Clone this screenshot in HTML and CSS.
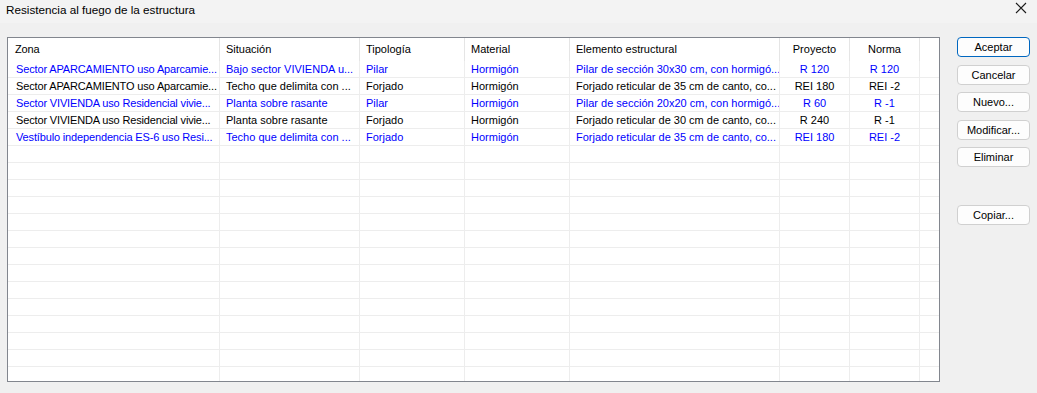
FILE: index.html
```html
<!DOCTYPE html>
<html lang="es">
<head>
    <meta charset="UTF-8">
    <meta name="viewport" content="width=device-width, initial-scale=1.0">
    <title>Resistencia al fuego de la estructura</title>
    <link rel="stylesheet" href="styles.css">
</head>
<body>
    <div class="titlebar">
        <span class="title">Resistencia al fuego de la estructura</span>
        <span class="close">
            <svg width="12" height="12" viewBox="0 0 12 12">
                <path d="M1 1 L11 11 M11 1 L1 11" stroke="#1a1a1a" stroke-width="1.1" fill="none"/>
            </svg>
        </span>
    </div>

    <div class="dialog">
        <div class="list">
            <div class="row head">
                <div class="cell first">Zona</div>
                <div class="cell">Situación</div>
                <div class="cell">Tipología</div>
                <div class="cell">Material</div>
                <div class="cell">Elemento estructural</div>
                <div class="cell center">Proyecto</div>
                <div class="cell center">Norma</div>
                <div class="cell last"></div>
            </div>

            <div class="row blue">
                <div class="cell first">Sector APARCAMIENTO uso Aparcamie...</div>
                <div class="cell">Bajo sector VIVIENDA u...</div>
                <div class="cell">Pilar</div>
                <div class="cell">Hormigón</div>
                <div class="cell">Pilar de sección 30x30 cm, con hormigó...</div>
                <div class="cell center">R 120</div>
                <div class="cell center">R 120</div>
                <div class="cell last"></div>
            </div>
            <div class="row">
                <div class="cell first">Sector APARCAMIENTO uso Aparcamie...</div>
                <div class="cell">Techo que delimita con ...</div>
                <div class="cell">Forjado</div>
                <div class="cell">Hormigón</div>
                <div class="cell">Forjado reticular de 35 cm de canto, co...</div>
                <div class="cell center">REI 180</div>
                <div class="cell center">REI -2</div>
                <div class="cell last"></div>
            </div>
            <div class="row blue">
                <div class="cell first">Sector VIVIENDA uso Residencial vivie...</div>
                <div class="cell">Planta sobre rasante</div>
                <div class="cell">Pilar</div>
                <div class="cell">Hormigón</div>
                <div class="cell">Pilar de sección 20x20 cm, con hormigó...</div>
                <div class="cell center">R 60</div>
                <div class="cell center">R -1</div>
                <div class="cell last"></div>
            </div>
            <div class="row">
                <div class="cell first">Sector VIVIENDA uso Residencial vivie...</div>
                <div class="cell">Planta sobre rasante</div>
                <div class="cell">Forjado</div>
                <div class="cell">Hormigón</div>
                <div class="cell">Forjado reticular de 30 cm de canto, co...</div>
                <div class="cell center">R 240</div>
                <div class="cell center">R -1</div>
                <div class="cell last"></div>
            </div>
            <div class="row blue">
                <div class="cell first">Vestíbulo independencia ES-6 uso Resi...</div>
                <div class="cell">Techo que delimita con ...</div>
                <div class="cell">Forjado</div>
                <div class="cell">Hormigón</div>
                <div class="cell">Forjado reticular de 35 cm de canto, co...</div>
                <div class="cell center">REI 180</div>
                <div class="cell center">REI -2</div>
                <div class="cell last"></div>
            </div>

            <div class="row empty"><div class="cell"></div><div class="cell"></div><div class="cell"></div><div class="cell"></div><div class="cell"></div><div class="cell"></div><div class="cell"></div><div class="cell last"></div></div>
            <div class="row empty"><div class="cell"></div><div class="cell"></div><div class="cell"></div><div class="cell"></div><div class="cell"></div><div class="cell"></div><div class="cell"></div><div class="cell last"></div></div>
            <div class="row empty"><div class="cell"></div><div class="cell"></div><div class="cell"></div><div class="cell"></div><div class="cell"></div><div class="cell"></div><div class="cell"></div><div class="cell last"></div></div>
            <div class="row empty"><div class="cell"></div><div class="cell"></div><div class="cell"></div><div class="cell"></div><div class="cell"></div><div class="cell"></div><div class="cell"></div><div class="cell last"></div></div>
            <div class="row empty"><div class="cell"></div><div class="cell"></div><div class="cell"></div><div class="cell"></div><div class="cell"></div><div class="cell"></div><div class="cell"></div><div class="cell last"></div></div>
            <div class="row empty"><div class="cell"></div><div class="cell"></div><div class="cell"></div><div class="cell"></div><div class="cell"></div><div class="cell"></div><div class="cell"></div><div class="cell last"></div></div>
            <div class="row empty"><div class="cell"></div><div class="cell"></div><div class="cell"></div><div class="cell"></div><div class="cell"></div><div class="cell"></div><div class="cell"></div><div class="cell last"></div></div>
            <div class="row empty"><div class="cell"></div><div class="cell"></div><div class="cell"></div><div class="cell"></div><div class="cell"></div><div class="cell"></div><div class="cell"></div><div class="cell last"></div></div>
            <div class="row empty"><div class="cell"></div><div class="cell"></div><div class="cell"></div><div class="cell"></div><div class="cell"></div><div class="cell"></div><div class="cell"></div><div class="cell last"></div></div>
            <div class="row empty"><div class="cell"></div><div class="cell"></div><div class="cell"></div><div class="cell"></div><div class="cell"></div><div class="cell"></div><div class="cell"></div><div class="cell last"></div></div>
            <div class="row empty"><div class="cell"></div><div class="cell"></div><div class="cell"></div><div class="cell"></div><div class="cell"></div><div class="cell"></div><div class="cell"></div><div class="cell last"></div></div>
            <div class="row empty"><div class="cell"></div><div class="cell"></div><div class="cell"></div><div class="cell"></div><div class="cell"></div><div class="cell"></div><div class="cell"></div><div class="cell last"></div></div>
            <div class="row empty"><div class="cell"></div><div class="cell"></div><div class="cell"></div><div class="cell"></div><div class="cell"></div><div class="cell"></div><div class="cell"></div><div class="cell last"></div></div>
            <div class="row empty"><div class="cell"></div><div class="cell"></div><div class="cell"></div><div class="cell"></div><div class="cell"></div><div class="cell"></div><div class="cell"></div><div class="cell last"></div></div>
        </div>

        <div class="buttons">
            <button class="btn primary">Aceptar</button>
            <button class="btn">Cancelar</button>
            <button class="btn">Nuevo...</button>
            <button class="btn">Modificar...</button>
            <button class="btn">Eliminar</button>
            <button class="btn spaced">Copiar...</button>
        </div>
    </div>
</body>
</html>
```

FILE: styles.css
```css
* {
    box-sizing: border-box;
    margin: 0;
    padding: 0;
}

body {
    width: 1037px;
    height: 393px;
    overflow: hidden;
    background-color: #f0f0f0;
    font-family: "Liberation Sans", Arial, sans-serif;
    font-size: 11px;
    color: #000;
}

.titlebar {
    height: 23px;
    background-color: #f3f3f3;
    display: flex;
    justify-content: space-between;
    align-items: center;
    padding-left: 6px;
    padding-right: 5px;
}

.title {
    font-size: 11.7px;
    line-height: 16px;
    margin-top: -4px;
}

.close {
    width: 22px;
    height: 16px;
    display: flex;
    align-items: center;
    justify-content: center;
    margin-top: -7px;
}

.dialog {
    display: flex;
    align-items: flex-start;
    padding-top: 14px;
    padding-left: 7px;
}

.list {
    width: 933px;
    height: 345px;
    border: 1px solid #82868e;
    background-color: #fff;
    overflow: hidden;
}

.row {
    display: grid;
    grid-template-columns: 212px 140px 105px 105px 210px 70px 70px 19px;
    height: 17px;
}

.row .cell {
    border-right: 1px solid #ededed;
    border-bottom: 1px solid #ededed;
    padding-left: 6px;
    line-height: 16px;
    white-space: nowrap;
    overflow: hidden;
}

.row .cell.first {
    padding-left: 8px;
    letter-spacing: -0.15px;
}

.row .cell.center {
    padding-left: 0;
    text-align: center;
}

.row .cell.last {
    border-right: none;
}

.row.head {
    height: 23px;
}

.row.head .cell {
    border-bottom: none;
    border-right-color: #e5e5e5;
    line-height: 22px;
}

.row.head .cell.first {
    padding-left: 7px;
}

.row.head .cell.center {
    padding-left: 0;
}

.blue {
    color: #0000ff;
}

.buttons {
    display: flex;
    flex-direction: column;
    gap: 7.5px;
    margin-left: 17px;
    width: 73px;
}

.btn {
    height: 20px;
    width: 73px;
    background-color: #fdfdfd;
    border: 1px solid #d0d0d0;
    border-radius: 4px;
    font-family: "Liberation Sans", Arial, sans-serif;
    font-size: 11px;
    color: #000;
    line-height: 18px;
}

.btn.primary {
    border-color: #0067c0;
}

.btn.spaced {
    margin-top: 30px;
}
```
